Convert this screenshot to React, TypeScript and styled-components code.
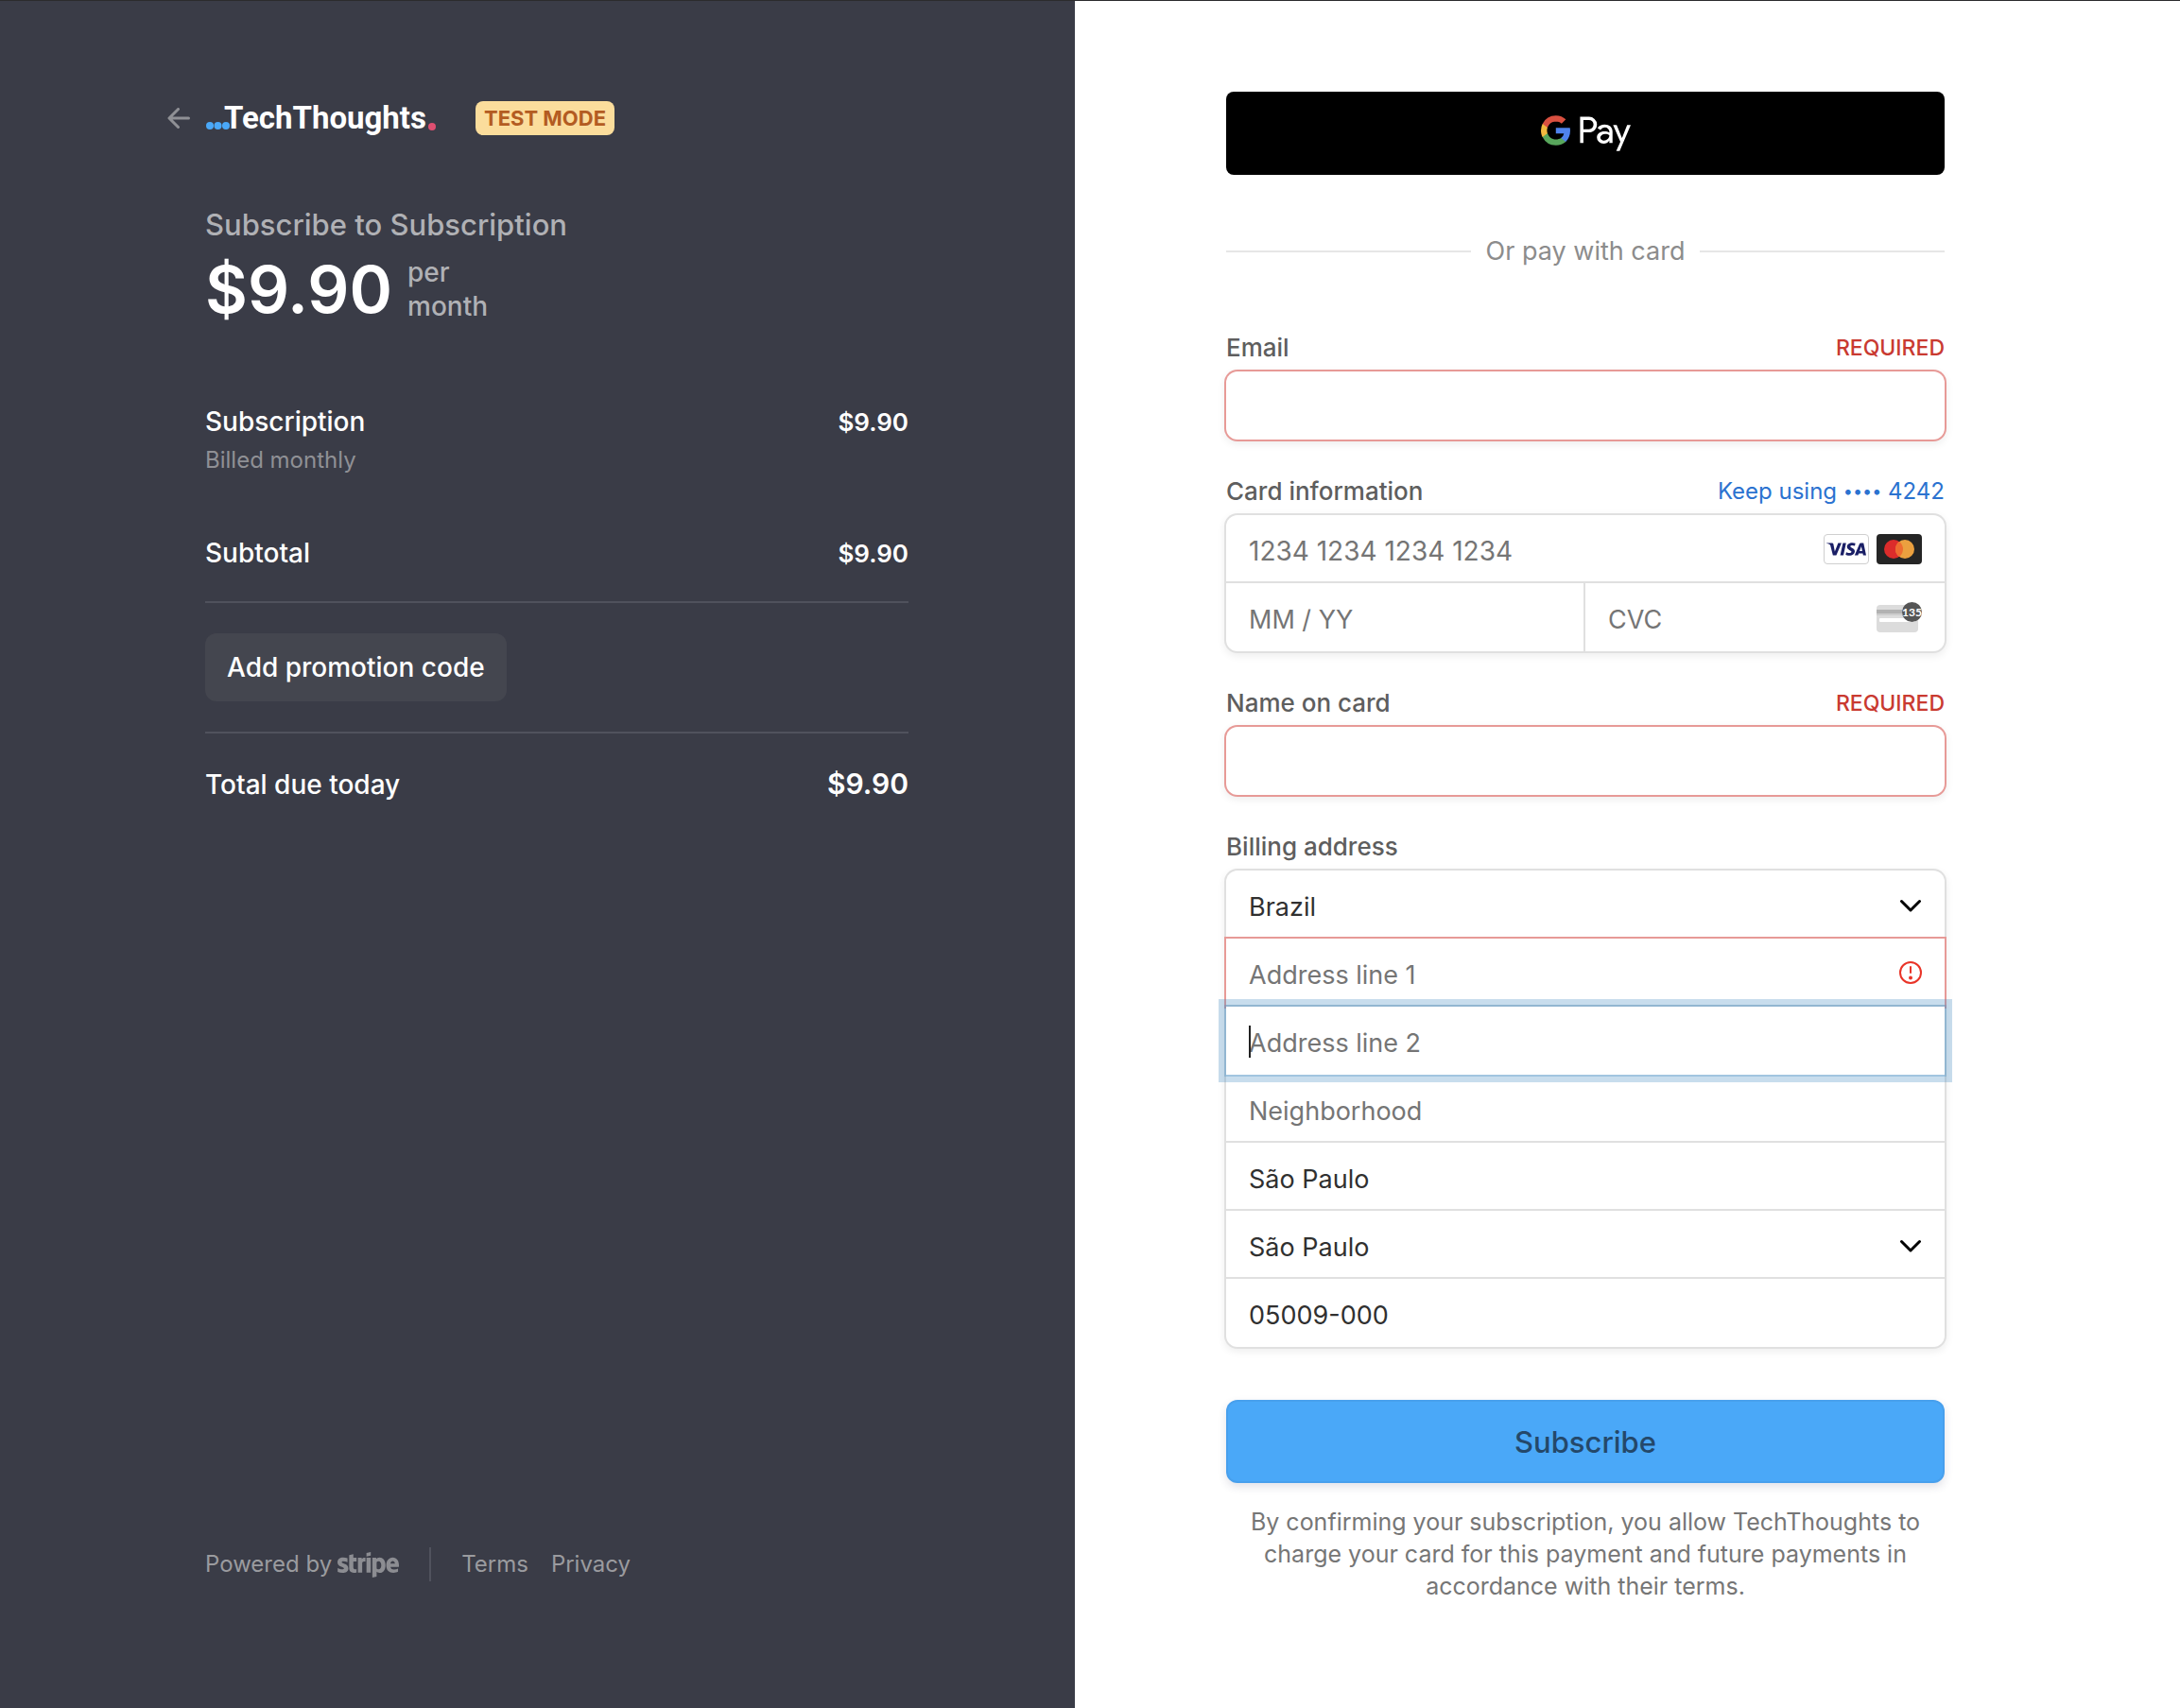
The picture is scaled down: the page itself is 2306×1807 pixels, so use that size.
import React from "react";
import styled, { createGlobalStyle, css } from "styled-components";
import { FaGooglePay, FaStripe } from "react-icons/fa";
import { SiVisa } from "react-icons/si";

const color = {
  panel: "#3a3c47",
  panelRule: "#50525d",
  panelButton: "#44464f",
  white: "#ffffff",
  soft: "#b0b1b5",
  muted: "#9a9b9f",
  faint: "#8f9095",
  badge: "#fbdd9c",
  badgeText: "#b35c22",
  sky: "#4aa8f8",
  rose: "#df4f71",
  label: "#5e5e5e",
  placeholder: "#757575",
  ink: "#303030",
  rule: "#e0e0e0",
  error: "#c93a31",
  errorRing: "#e79a97",
  focusRing: "rgba(72, 142, 195, 0.3)",
  link: "#2b72d0",
};

const GlobalStyle = createGlobalStyle`
  *, *::before, *::after { box-sizing: border-box; }
  body {
    margin: 0;
    background: ${color.white};
    font-family: Inter, "Open Sans", sans-serif;
    font-size: 27px;
    line-height: 40px;
  }
  button, input, select { font: inherit; margin: 0; }
  h1, p { margin: 0; font: inherit; }
`;

const Page = styled.div`
  display: grid;
  grid-template-columns: calc(50% - 16px) 1fr;
  min-height: 100vh;
  border-top: 1px solid #2b2b2d;
`;

const SummaryPanel = styled.aside`
  display: flex;
  justify-content: flex-end;
  padding: 96px 176px 134px 48px;
  background: ${color.panel};
  color: ${color.white};
  font-size: 28px;
  font-weight: 500;
`;

const SummaryColumn = styled.div`
  display: flex;
  flex-direction: column;
  width: 100%;
  max-width: 744px;
`;

const Header = styled.header`
  display: flex;
  align-items: center;
  height: 56px;
  margin-left: -40px;
`;

const BackButton = styled.button`
  display: flex;
  padding: 0;
  margin-right: 16px;
  border: 0;
  background: none;
  color: ${color.faint};
`;

const Brand = styled.a`
  display: flex;
  align-items: baseline;
  margin-right: 42px;
  color: ${color.white};
  font-family: Roboto, sans-serif;
  font-size: 33px;
  font-weight: 700;
  text-decoration: none;
`;

const BrandDots = styled.svg`
  margin-right: -6px;
  overflow: visible;
`;

const BrandStop = styled.svg`
  margin-left: 2px;
  overflow: visible;
`;

const Badge = styled.span`
  padding: 0 9px;
  border-radius: 8px;
  background: ${color.badge};
  color: ${color.badgeText};
  font-size: 22px;
  font-weight: 700;
  line-height: 36px;
`;

const Title = styled.h1`
  margin-top: 65px;
  color: ${color.soft};
  font-size: 31px;
  font-weight: 500;
`;

const PriceRow = styled.div`
  display: flex;
  gap: 16px;
  margin: 12px 0 86px;
`;

const Price = styled.span`
  font-size: 69px;
  font-weight: 600;
  line-height: 72px;
`;

const Interval = styled.span`
  width: 90px;
  color: ${color.soft};
  line-height: 36px;
`;

const LineItem = styled.div<{ $total?: boolean }>`
  display: flex;
  justify-content: space-between;
  align-items: baseline;
  margin-top: ${(p) => (p.$total ? 3 : 0)}px;
  line-height: 36px;
`;

const Amount = styled.span<{ $large?: boolean }>`
  font-size: ${(p) => (p.$large ? 30 : 26)}px;
  font-weight: 600;
`;

const ItemNote = styled.p`
  margin: 6px 0 64px;
  color: ${color.faint};
  font-size: 24px;
  font-weight: 400;
  line-height: 32px;
`;

const Rule = styled.hr`
  width: 100%;
  height: 2px;
  margin: 32px 0;
  border: 0;
  background: ${color.panelRule};
`;

const PromoButton = styled.button`
  align-self: flex-start;
  height: 72px;
  padding: 0 23px;
  border: 0;
  border-radius: 12px;
  background: ${color.panelButton};
  color: ${color.white};
  font-weight: 500;
`;

const Footer = styled.footer`
  display: flex;
  align-items: center;
  height: 36px;
  margin-top: auto;
  color: ${color.muted};
  font-size: 24px;
  font-weight: 400;
`;

const FooterLink = styled.a`
  display: flex;
  align-items: center;
  gap: 6px;
  color: inherit;
  text-decoration: none;
`;

const FooterDivider = styled.span`
  width: 2px;
  height: 36px;
  margin: 0 32px;
  background: ${color.panelRule};
`;

const FooterNav = styled.nav`
  display: flex;
  gap: 24px;
`;

const PaymentPanel = styled.main`
  padding: 96px 48px 96px 160px;
`;

const PaymentForm = styled.form`
  display: flex;
  flex-direction: column;
  max-width: 760px;
`;

const WalletButton = styled.button`
  display: flex;
  align-items: center;
  justify-content: center;
  gap: 9px;
  height: 88px;
  padding: 0;
  border: 0;
  border-radius: 8px;
  background: #000000;
  color: ${color.white};
`;

const GoogleMark = styled.svg`
  margin-bottom: 7px;
`;

const PayMark = styled.span`
  display: flex;
  justify-content: flex-end;
  width: 55px;
  margin-bottom: 2px;
  overflow: hidden;

  svg { flex-shrink: 0; }
`;

const OrDivider = styled.div`
  display: flex;
  align-items: center;
  gap: 16px;
  margin: 61px 0 64px;
  color: #8c8c8c;

  &::before, &::after {
    content: "";
    flex: 1;
    height: 2px;
    background: #e6e6e6;
  }
`;

const Field = styled.div`
  display: flex;
  flex-direction: column;
  gap: 7px;
  margin-bottom: 37px;

  &:last-of-type { margin-bottom: 56px; }
`;

const FieldHeader = styled.div`
  display: flex;
  align-items: center;
  justify-content: space-between;
  line-height: 36px;
`;

const FieldLabel = styled.label`
  color: ${color.label};
  font-size: 26px;
  font-weight: 500;
`;

const ErrorNote = styled.span`
  color: ${color.error};
  font-size: 23px;
  font-weight: 500;
`;

const SavedCardLink = styled.a`
  color: ${color.link};
  font-size: 24px;
  text-decoration: none;
`;

const CardMask = styled.span`
  font-size: 18px;
  line-height: 1;
  vertical-align: 2px;
`;

const ControlGroup = styled.div<{ $invalid?: boolean }>`
  border-radius: 12px;
  background: ${color.white};
  box-shadow:
    0 0 0 2px ${(p) => (p.$invalid ? color.errorRing : color.rule)},
    0 3px 8px 2px rgba(0, 0, 0, 0.07);
`;

const ControlPair = styled.div`
  display: grid;
  grid-template-columns: 1fr 1fr;

  > :first-child { border-right: 2px solid ${color.rule}; }
`;

type RowState = "invalid" | "focused";

const ControlRow = styled.div<{ $state?: RowState; $ruled?: boolean }>`
  position: relative;
  height: 72px;
  ${(p) => p.$ruled && css`border-bottom: 2px solid ${color.rule};`}
  ${(p) => p.$state === "invalid" && css`
    z-index: 1;
    box-shadow: 0 0 0 2px ${color.errorRing};
  `}
  ${(p) => p.$state === "focused" && css`
    z-index: 2;
    background: ${color.white};
    box-shadow: 0 0 0 2px ${color.focusRing}, 0 0 0 8px ${color.focusRing};
  `}
`;

const controlStyle = css`
  display: block;
  width: 100%;
  height: 72px;
  padding: 4px 24px 0;
  border: 0;
  border-radius: 12px;
  outline: 0;
  background: transparent;
  color: ${color.ink};
`;

const TextInput = styled.input<{ $card?: boolean }>`
  ${controlStyle}
  ${(p) => p.$card && css`font-size: 28px;`}

  &::placeholder {
    color: ${color.placeholder};
    opacity: 1;
  }
`;

const SelectInput = styled.select`
  ${controlStyle}
  padding-top: 6px;
  appearance: none;
`;

const Adornment = styled.span`
  position: absolute;
  top: 0;
  right: 24px;
  display: flex;
  align-items: center;
  gap: 8px;
  height: 72px;
  pointer-events: none;
`;

const Caret = styled.span`
  position: absolute;
  top: 20px;
  left: 24px;
  width: 2px;
  height: 34px;
  background: #222222;
`;

const VisaBadge = styled.span`
  display: flex;
  align-items: center;
  justify-content: center;
  width: 48px;
  height: 32px;
  border: 1px solid #cfcfcf;
  border-radius: 4px;
  background: ${color.white};
  color: #1a1f66;
`;

const SubscribeButton = styled.button`
  height: 88px;
  padding: 2px 24px 0;
  border: 0;
  border-radius: 12px;
  background: ${color.sky};
  box-shadow:
    inset 0 0 0 2px rgba(50, 50, 93, 0.07),
    0 4px 10px rgba(50, 50, 93, 0.14);
  color: #24486a;
  font-size: 31px;
  font-weight: 500;
`;

const Disclaimer = styled.p`
  margin-top: 24px;
  color: #767676;
  font-size: 25px;
  line-height: 34px;
  text-align: center;
`;

const BackArrow = () => (
  <svg width="24" height="22" viewBox="0 0 24 22" fill="none" stroke="currentColor" strokeWidth="3" strokeLinecap="round" strokeLinejoin="round">
    <path d="M11.5 1.5 2 11l9.5 9.5M2.5 11h20" />
  </svg>
);

const Chevron = () => (
  <svg width="24" height="16" viewBox="0 0 24 16" fill="none" stroke="#000000" strokeWidth="3" strokeLinecap="round" strokeLinejoin="round">
    <path d="M2.5 4.5 12 14l9.5-9.5" />
  </svg>
);

const AlertIcon = () => (
  <svg width="24" height="24" viewBox="0 0 24 24">
    <circle cx="12" cy="12" r="11" fill="none" stroke="#e93428" strokeWidth="2" />
    <rect x="11" y="5" width="2" height="8" rx="1" fill="#e93428" />
    <circle cx="12" cy="17.5" r="2" fill="#e93428" />
  </svg>
);

const MastercardIcon = () => (
  <svg width="48" height="32" viewBox="0 0 48 32" role="img" aria-label="Mastercard">
    <rect width="48" height="32" rx="4" fill="#252525" />
    <circle cx="18" cy="16" r="10" fill="#dc2c2b" />
    <circle cx="30" cy="16" r="10" fill="#eba03f" />
    <path d="M24 8a10 10 0 0 1 0 16 10 10 0 0 1 0-16z" fill="#ee6c30" />
  </svg>
);

const CvcIcon = () => (
  <svg width="48" height="32" viewBox="0 0 48 32" aria-hidden="true">
    <rect y="3" width="44" height="29" rx="4" fill="#dcdcdc" />
    <rect y="8" width="44" height="4" fill="#b2b2b2" />
    <rect y="12" width="44" height="2" fill="#cdcdcd" />
    <rect x="3" y="17" width="38" height="4" rx="1" fill="#ffffff" />
    <circle cx="37.5" cy="10.5" r="10.5" fill="#555555" />
    <text x="37.5" y="15" textAnchor="middle" fontFamily="Lato, sans-serif" fontSize="12" fontWeight="700" fill="#ffffff">135</text>
  </svg>
);

const GoogleG = () => (
  <GoogleMark width="31" height="32" viewBox="0.26 0.26 13.2 13.44">
    <path fill="#4f83ec" d="M13.448 7.134c0-.473-.04-.93-.116-1.366H6.988v2.588h3.634a3.11 3.11 0 0 1-1.344 2.042v1.68h2.169c1.27-1.17 2.001-2.9 2.001-4.944" />
    <path fill="#58a65c" d="M6.988 13.7c1.816 0 3.344-.595 4.459-1.621l-2.169-1.681c-.603.406-1.38.643-2.29.643-1.754 0-3.244-1.182-3.776-2.774H.978v1.731a6.728 6.728 0 0 0 6.01 3.703" />
    <path fill="#f2b93f" d="M3.212 8.267a4.034 4.034 0 0 1 0-2.572V3.964H.978A6.678 6.678 0 0 0 .261 6.98c0 1.085.26 2.11.717 3.017l2.234-1.731z" />
    <path fill="#d95040" d="M6.988 2.921c.992 0 1.88.34 2.58 1.008v.001l1.92-1.918C10.324.928 8.804.262 6.989.262a6.728 6.728 0 0 0-6.01 3.702l2.234 1.731c.532-1.592 2.022-2.774 3.776-2.774" />
  </GoogleMark>
);

function OrderSummary() {
  return (
    <SummaryPanel>
      <SummaryColumn>
        <Header>
          <BackButton type="button" aria-label="Back"><BackArrow /></BackButton>
          <Brand href="#">
            <BrandDots width="26" height="7" viewBox="0 0 26 7" fill={color.sky}>
              <circle cx="5" cy="4" r="4" />
              <circle cx="13.5" cy="4" r="4" />
              <circle cx="22" cy="4" r="4" />
            </BrandDots>
            <span>TechThoughts</span>
            <BrandStop width="8" height="8" viewBox="0 0 8 8">
              <circle cx="4" cy="6" r="4" fill={color.rose} />
            </BrandStop>
          </Brand>
          <Badge>TEST MODE</Badge>
        </Header>

        <Title>Subscribe to Subscription</Title>
        <PriceRow>
          <Price>$9.90</Price>
          <Interval>per month</Interval>
        </PriceRow>

        <LineItem>
          <span>Subscription</span>
          <Amount>$9.90</Amount>
        </LineItem>
        <ItemNote>Billed monthly</ItemNote>
        <LineItem>
          <span>Subtotal</span>
          <Amount>$9.90</Amount>
        </LineItem>
        <Rule />
        <PromoButton type="button">Add promotion code</PromoButton>
        <Rule />
        <LineItem $total>
          <span>Total due today</span>
          <Amount $large>$9.90</Amount>
        </LineItem>

        <Footer>
          <FooterLink href="#">
            Powered by <FaStripe size={65} color="#8c8d92" aria-label="Stripe" />
          </FooterLink>
          <FooterDivider />
          <FooterNav>
            <FooterLink href="#">Terms</FooterLink>
            <FooterLink href="#">Privacy</FooterLink>
          </FooterNav>
        </Footer>
      </SummaryColumn>
    </SummaryPanel>
  );
}

function RequiredField({ id, label, type }: { id: string; label: string; type: string }) {
  return (
    <Field>
      <FieldHeader>
        <FieldLabel htmlFor={id}>{label}</FieldLabel>
        <ErrorNote>REQUIRED</ErrorNote>
      </FieldHeader>
      <ControlGroup $invalid>
        <TextInput id={id} type={type} />
      </ControlGroup>
    </Field>
  );
}

function CardField() {
  return (
    <Field>
      <FieldHeader>
        <FieldLabel htmlFor="card-number">Card information</FieldLabel>
        <SavedCardLink href="#">Keep using <CardMask>••••</CardMask> 4242</SavedCardLink>
      </FieldHeader>
      <ControlGroup>
        <ControlRow $ruled>
          <TextInput $card id="card-number" placeholder="1234 1234 1234 1234" />
          <Adornment>
            <VisaBadge><SiVisa size={42} aria-label="Visa" /></VisaBadge>
            <MastercardIcon />
          </Adornment>
        </ControlRow>
        <ControlPair>
          <ControlRow>
            <TextInput aria-label="Expiration" placeholder="MM / YY" />
          </ControlRow>
          <ControlRow>
            <TextInput aria-label="CVC" placeholder="CVC" />
            <Adornment><CvcIcon /></Adornment>
          </ControlRow>
        </ControlPair>
      </ControlGroup>
    </Field>
  );
}

function AddressField() {
  return (
    <Field>
      <FieldHeader>
        <FieldLabel htmlFor="country">Billing address</FieldLabel>
      </FieldHeader>
      <ControlGroup>
        <ControlRow $ruled>
          <SelectInput id="country" defaultValue="Brazil">
            <option>Brazil</option>
          </SelectInput>
          <Adornment><Chevron /></Adornment>
        </ControlRow>
        <ControlRow $ruled $state="invalid">
          <TextInput aria-label="Address line 1" placeholder="Address line 1" />
          <Adornment><AlertIcon /></Adornment>
        </ControlRow>
        <ControlRow $state="focused">
          <TextInput aria-label="Address line 2" placeholder="Address line 2" />
          <Caret />
        </ControlRow>
        <ControlRow $ruled>
          <TextInput aria-label="Neighborhood" placeholder="Neighborhood" />
        </ControlRow>
        <ControlRow $ruled>
          <TextInput aria-label="City" defaultValue="São Paulo" />
        </ControlRow>
        <ControlRow $ruled>
          <SelectInput aria-label="State" defaultValue="São Paulo">
            <option>São Paulo</option>
          </SelectInput>
          <Adornment><Chevron /></Adornment>
        </ControlRow>
        <ControlRow>
          <TextInput aria-label="Postal code" defaultValue="05009-000" />
        </ControlRow>
      </ControlGroup>
    </Field>
  );
}

export default function App() {
  return (
    <>
      <GlobalStyle />
      <Page>
        <OrderSummary />
        <PaymentPanel>
          <PaymentForm onSubmit={(e) => e.preventDefault()}>
            <WalletButton type="button" aria-label="Google Pay">
              <GoogleG />
              <PayMark><FaGooglePay size={95} /></PayMark>
            </WalletButton>
            <OrDivider>Or pay with card</OrDivider>
            <RequiredField id="email" label="Email" type="email" />
            <CardField />
            <RequiredField id="name" label="Name on card" type="text" />
            <AddressField />
            <SubscribeButton type="submit">Subscribe</SubscribeButton>
            <Disclaimer>
              By confirming your subscription, you allow TechThoughts to charge your card for this
              payment and future payments in accordance with their terms.
            </Disclaimer>
          </PaymentForm>
        </PaymentPanel>
      </Page>
    </>
  );
}
